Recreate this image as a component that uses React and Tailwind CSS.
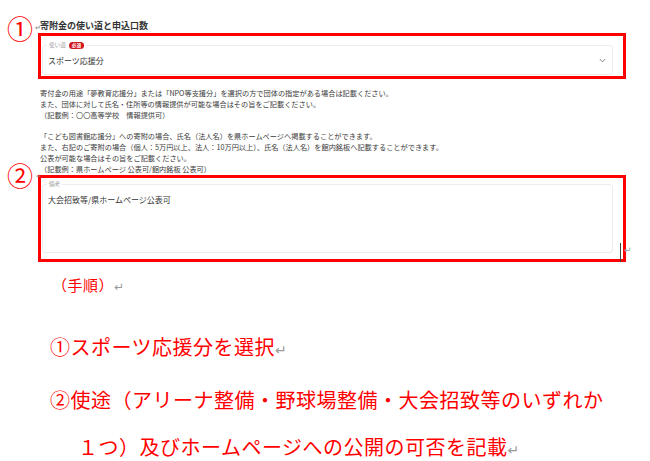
import React from "react";

const RED = "text-[#ff0000]";

const Ret = ({ className = "" }) => (
  <span className={`font-['DejaVu_Sans',sans-serif] text-[#9a9a9a] ${className}`}>↵</span>
);

const notes = [
  "寄付金の用途「夢教育応援分」または「NPO等支援分」を選択の方で団体の指定がある場合は記載ください。",
  "また、団体に対して氏名・住所等の情報提供が可能な場合はその旨をご記載ください。",
  "（記載例：〇〇高等学校　情報提供可）",
  "",
  "「こども図書館応援分」への寄附の場合、氏名（法人名）を県ホームページへ掲載することができます。",
  "また、右記のご寄附の場合（個人：5万円以上、法人：10万円以上）、氏名（法人名）を館内銘板へ記載することができます。",
  "公表が可能な場合はその旨をご記載ください。",
  "（記載例：県ホームページ 公表可/館内銘板 公表可）",
];

export default function App() {
  return (
    <div className="w-[650px] h-[461px] bg-white overflow-hidden font-['Noto_Sans_CJK_JP',sans-serif] pl-[10px]">
      {/* section 1: use select */}
      <div className="flex pt-[18px]">
        <div className={`w-[28px] -ml-[3px] -mt-[4px] text-[26px] leading-[28px] ${RED}`}>①</div>
        <div className="w-[588px] ml-[3px]">
          <div className="relative h-[15px] flex items-center pl-[2px] text-[9px] font-bold text-[#333]">
            <Ret className="absolute -left-[3px] top-[7px] text-[7px] leading-[7px]" />
            寄附金の使い道と申込口数
          </div>
          <div className="h-[46px] border-[3px] border-[#ff0000] pl-[1px] pr-[10px] pt-[6px]">
            <fieldset className="border border-[#ececec] rounded-[3px] h-[33px]">
              <legend className="ml-[4px] px-[2px] flex items-center gap-[3px] h-[7px]">
                <span className="text-[5.6px] leading-[7px] text-[#9a9a9a]">使い道</span>
                <span className="bg-[#d0131b] text-white rounded-full px-[3px] text-[4.6px] leading-[7px] font-bold">必須</span>
              </legend>
              <div className="flex items-center justify-between pl-[5px] pr-[6px] h-[24px]">
                <span className="text-[8px] text-[#333]">スポーツ応援分</span>
                <svg width="7" height="5" viewBox="0 0 7 5" className="mb-[1px]">
                  <polyline points="0.8,1 3.5,3.8 6.2,1" fill="none" stroke="#777" strokeWidth="0.9" />
                </svg>
              </div>
            </fieldset>
          </div>
        </div>
      </div>

      {/* notes */}
      <div className="pl-[30px] mt-[9px] text-[7.2px] leading-[10.8px] text-[#3a3a3a]">
        {notes.map((t, i) => (
          <div key={i} className="h-[10.8px] whitespace-nowrap">{t}</div>
        ))}
      </div>

      {/* section 2: remarks */}
      <div className="flex mt-[1px]">
        <div className={`w-[28px] -ml-[3px] -mt-[14px] text-[26px] leading-[28px] ${RED}`}>②</div>
        <div className="relative w-[588px] ml-[3px]">
          <Ret className="absolute -left-[2px] -top-[2px] text-[6px] leading-[6px]" />
          <div className="h-[87px] border-[3px] border-[#ff0000] pl-[1px] pr-[10px] pt-[3px]">
            <fieldset className="border border-[#ececec] rounded-[3px] h-[72px]">
              <legend className="ml-[4px] px-[2px] text-[5.6px] leading-[7px] text-[#9a9a9a]">備考</legend>
              <div className="pl-[5px] pt-[6px] text-[8px] leading-[12px] text-[#333]">
                大会招致等/県ホームページ公表可
              </div>
            </fieldset>
          </div>
          <div className="absolute left-[582px] top-[68px] w-[1px] h-[19px] bg-[#444]" />
          <Ret className="absolute left-[586px] top-[71px] text-[9px] leading-[9px]" />
        </div>
      </div>

      {/* steps */}
      <div className={`${RED} tracking-[0.5px]`}>
        <div className="pl-[42px] mt-[13px] text-[15px] leading-[20px]">
          （手順）<Ret className="text-[12px] tracking-normal" />
        </div>
        <div className="pl-[40px] mt-[38px] text-[20px] leading-[24px] whitespace-nowrap">
          ①スポーツ応援分を選択<Ret className="text-[14px] tracking-normal" />
        </div>
        <div className="pl-[40px] mt-[26px] text-[20px] leading-[24px] whitespace-nowrap">
          ②使途（アリーナ整備・野球場整備・大会招致等のいずれか
        </div>
        <div className="pl-[68px] mt-[23px] text-[20px] leading-[24px] whitespace-nowrap">
          １つ）及びホームページへの公開の可否を記載<Ret className="text-[14px] tracking-normal" />
        </div>
      </div>
    </div>
  );
}
